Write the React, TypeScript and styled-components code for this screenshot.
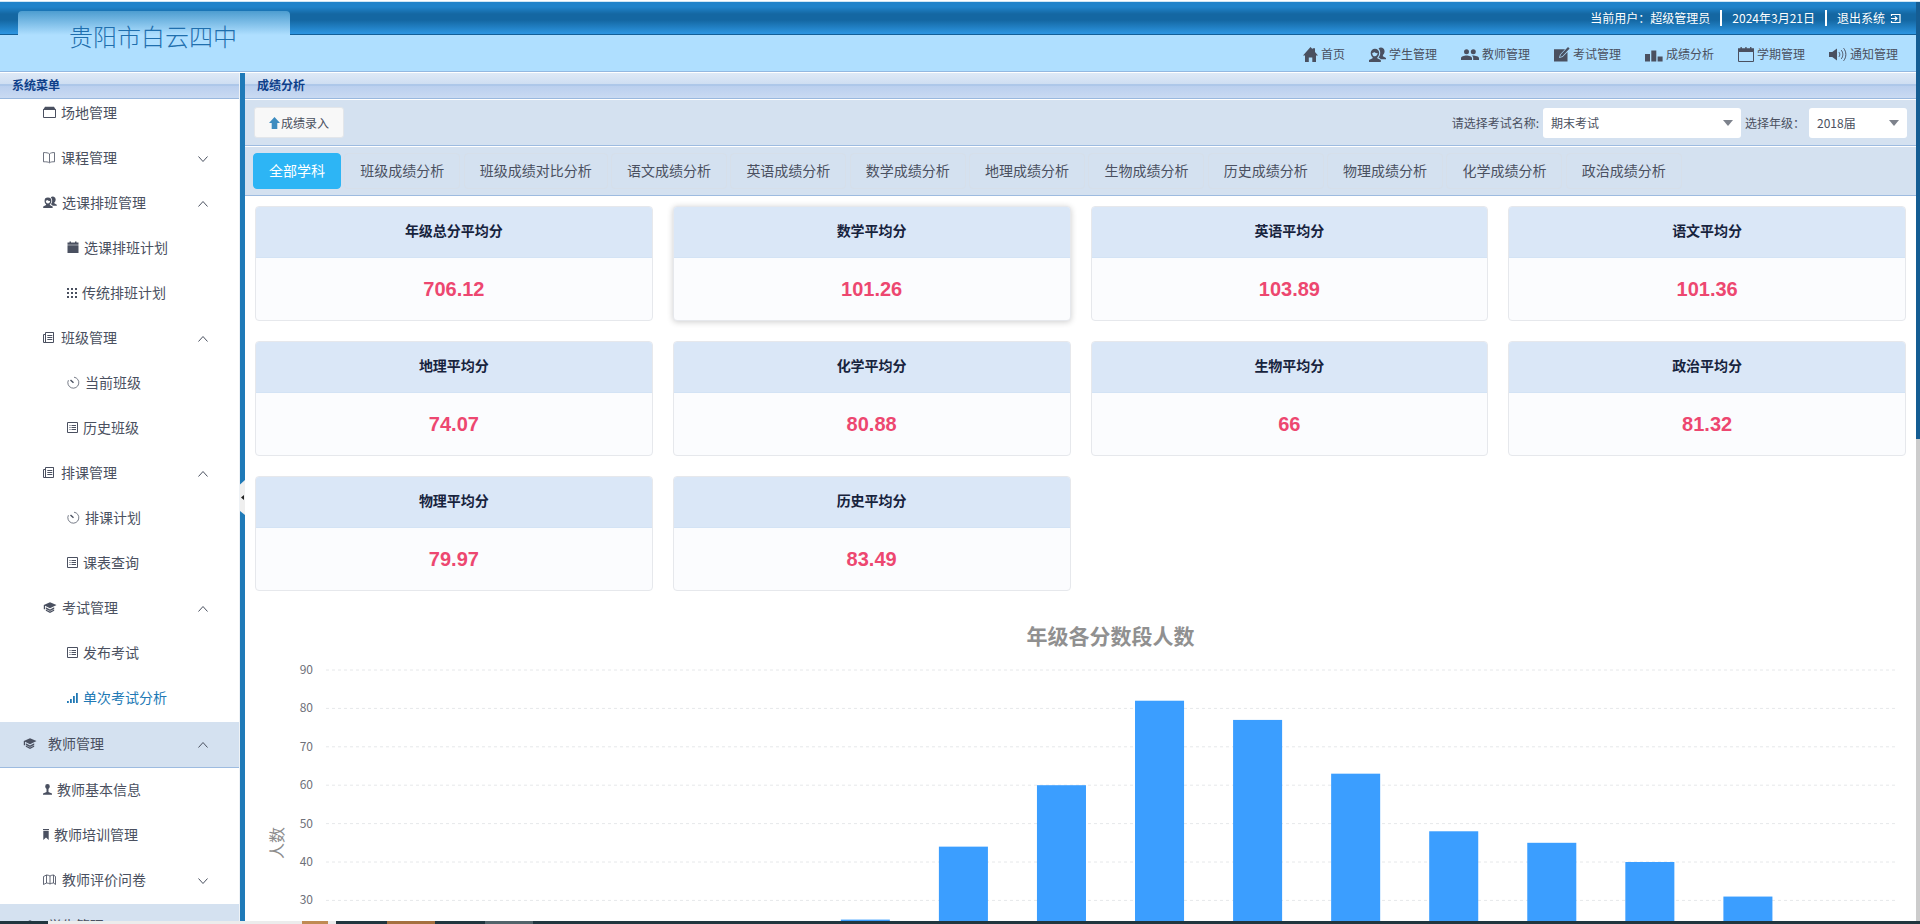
import React from "react";
import styled, { createGlobalStyle } from "styled-components";

const GlobalStyle = createGlobalStyle`
  *, *::before, *::after { box-sizing: border-box; }
  body {
    margin: 0;
    background: #fff;
    color: #4a5060;
    font: 12px/18px "Noto Sans CJK SC", "Noto Sans", sans-serif;
  }
  button, select { font: inherit; color: inherit; }
  a { color: inherit; text-decoration: none; }
  ul { list-style: none; margin: 0; padding: 0; }
  h1, h2, h3, p { margin: 0; }
`;

/* ---------- icons ---------- */

type IconName =
  | "home" | "students" | "team" | "edit" | "columns" | "calendar" | "sound"
  | "box" | "book" | "calendarSolid" | "grid" | "docs" | "gauge" | "list"
  | "cap" | "signal" | "person" | "bookmark" | "map" | "exit" | "up" | "down"
  | "arrowUp" | "caret";

const line = { fill: "none", stroke: "currentColor", strokeWidth: 1 };

const icons: Record<IconName, { box: string; art: React.ReactNode }> = {
  home: {
    box: "0 0 15 15",
    art: <path d="M7.5 0 9.6 2.3V1.2h2.4v3.7L15 8.4h-2V15H9.3v-4.6H5.8V15H2V8.4H0z" />,
  },
  students: {
    box: "0 0 17 15",
    art: (
      <>
        <path d="M9.5 1.6A3.6 3.6 0 0 1 15.6 4c0 1.800-.6 3.200-1.700 4v1.200L17 11v1.200h-5.200c-.5-.8-1.400-1.400-2.300-1.800 1.200-1.300 1.800-3 1.700-4.800-.1-1.700-.7-3-1.700-4z" />
        <path fillRule="evenodd" d="M6 1.800a4.200 4.200 0 0 1 4.200 4.300c0 1.800-.8 3.300-1.900 4.100v1L11.800 13v2H0v-2l3.600-1.800v-1C2.500 9.400 1.700 7.900 1.700 6.100A4.200 4.200 0 0 1 6 1.800zM3.200 5.900c0 2 1.200 3.400 2.700 3.400s2.700-1.400 2.700-3.200C7 6.300 6 5.800 5.300 5 4.700 5.600 4 5.900 3.200 5.900z" />
      </>
    ),
  },
  team: {
    box: "0 0 18 15",
    art: (
      <>
        <circle cx="5.500" cy="4.700" r="2.500" />
        <circle cx="12.300" cy="4.700" r="2.500" />
        <path d="M0 13v-1.800C0 9.500 3.200 8.500 5.500 8.500S11 9.500 11 11.200V13zM12.200 13v-1.800c0-1-.5-1.900-1.400-2.600 2.700-.3 7.200.7 7.200 2.600V13z" />
      </>
    ),
  },
  edit: {
    box: "0 0 16 15",
    art: (
      <>
        <path d="M0 2.200h11L6 7.500 5 11l3.600-1L13.500 5v9.500H0z" />
        <path d="m6 10 .8-2.600L14 0l1.600 1.500L8.500 9.200z" />
      </>
    ),
  },
  columns: {
    box: "0 0 18 15",
    art: <path d="M0 7h5v7.500H0zM6.300 3.500h5v11h-5zM12.600 9.500h5v5h-5z" />,
  },
  calendar: {
    box: "0 0 16 15",
    art: (
      <>
        <path d="M0 1.200h2.500V0h1.300v1.200h3.500V0h1.300v1.200h3.500V0h1.300v1.200H16v3.600H0z" />
        <path {...line} d="M.5 4.500h15v10H.5z" />
      </>
    ),
  },
  sound: {
    box: "0 0 18 15",
    art: (
      <>
        <path d="M0 5h3.200L8 1.500v12L3.200 10H0z" />
        <path {...line} d="M10 5.200c1 1.400 1 3.200 0 4.600M12.300 3.200c2 2.500 2 6.100 0 8.600M14.600 1.200c3 3.700 3 8.900 0 12.600" />
      </>
    ),
  },
  box: {
    box: "0 0 13 13",
    art: (
      <>
        <path d="M2 .8h9L13 4H0z" />
        <path {...line} d="M.5 3.500h12v8H.5z" />
      </>
    ),
  },
  book: {
    box: "0 0 13 13",
    art: (
      <path {...line} d="M6.500 3v8.500M6.500 3C5.500 1.800 3 1.500.5 1.600v9.200c2.500-.1 5 .1 6 1M6.500 3c1-1.200 3-1.500 5-1.400v9.200c-2.200-.1-4 .1-5 1" strokeOpacity=".8" />
    ),
  },
  calendarSolid: {
    box: "0 0 12 13",
    art: <path d="M.5 1.500h2V.5h1.500v1h4v-1h1.500v1h2v2.300H.5zM.5 4.300h11V12H.5z" />,
  },
  grid: {
    box: "0 0 10 13",
    art: <path d="M0 2h2v2H0zM4 2h2v2H4zM8 2h2v2H8zM0 6h2v2H0zM4 6h2v2H4zM8 6h2v2H8zM0 10h2v2H0zM4 10h2v2H4zM8 10h2v2H8z" />,
  },
  docs: {
    box: "0 0 13 13",
    art: (
      <>
        <path {...line} d="M2.500 1.500h8v10h-10v-8h2zM2.500 3v8.500M4.300 4.500h5M4.300 6.500h5M4.300 8.500h5" />
        <path d="M3 1h7.500v1H3z" />
      </>
    ),
  },
  gauge: {
    box: "0 0 13 13",
    art: (
      <>
        <path {...line} strokeOpacity=".75" d="M7 1.200a5.500 5.500 0 1 1-5.600 3" />
        <path {...line} d="m3.500 4 3 2.800" strokeWidth="1.400" />
      </>
    ),
  },
  list: {
    box: "0 0 11 13",
    art: <path {...line} d="M.5 1.500h10v10H.5zM2.500 4.500h1M4.500 4.500h4.500M2.500 6.500h1M4.500 6.500h4.500M2.500 8.500h1M4.500 8.500h4.500" />,
  },
  cap: {
    box: "0 0 14 13",
    art: <path d="M7 1.200 13.500 4 7 7.300 2 4.800v3.400H.8V4zM2.800 6.300 7 8.500l4.200-2.200v1.600L7 10 2.800 7.900zM2.800 8.500 7 10.600l4.200-2.100v1.200L7 12 2.800 9.800z" />,
  },
  signal: {
    box: "0 0 11 13",
    art: <path d="M0 10h1.800v2H0zM3 8h1.800v4H3zM6 5h1.800v7H6zM9 2h1.800v10H9z" />,
  },
  person: {
    box: "0 0 9 13",
    art: <path d="M4.500 1a2.300 2.300 0 0 1 2.300 2.400c0 1-.6 1.900-1.300 2.300V9L9 10.500v1.300H0v-1.300L3.500 9V5.700C2.800 5.300 2.200 4.400 2.200 3.400A2.300 2.300 0 0 1 4.500 1z" />,
  },
  bookmark: {
    box: "0 0 6 13",
    art: <path d="M0 1h6v1H0zM.3 2.700h5.400V12L3 9.500.3 12z" />,
  },
  map: {
    box: "0 0 14 13",
    art: <path {...line} strokeOpacity=".85" d="M.5 3.500 3.500 2c1.500 0 2 .3 3.500 1 1.500-.7 2-1 3.500-1l2 1.500v8L10.500 10c-1.500 0-2 .3-3.500 1-1.500-.7-2-1-3.500-1l-3 1.500zM3.500 2v8M7 3v8M10.500 2v8" />,
  },
  exit: {
    box: "0 0 11 11",
    art: (
      <>
        <path {...line} d="M1.500 3V1.500h8.500v8H1.500V8" strokeWidth="1.200" />
        <path {...line} d="M1 5.500h6M4.800 3.300l2.200 2.200-2.200 2.200" strokeWidth="1.200" />
      </>
    ),
  },
  up: { box: "0 0 10 6", art: <path {...line} d="m.5 5.500 4.500-5 4.500 5" /> },
  down: { box: "0 0 10 6", art: <path {...line} d="m.5.500 4.500 5 4.500-5" /> },
  arrowUp: { box: "0 0 11 12", art: <path d="M5.500 0 11 6H8.300v6H2.700V6H0z" /> },
  caret: { box: "0 0 10 6", art: <path d="M0 0h10L5 6z" /> },
};

const Glyph = styled.svg`
  display: block;
  flex: none;
  fill: currentColor;
`;

function Icon({ name }: { name: IconName }) {
  const { box, art } = icons[name];
  const [, , w, h] = box.split(" ");
  return (
    <Glyph viewBox={box} width={w} height={h} aria-hidden="true">
      {art}
    </Glyph>
  );
}

/* ---------- page frame ---------- */

const Page = styled.div`
  display: flex;
  flex-direction: column;
  height: 100vh;
  overflow: hidden;
  border-top: 1px solid #fff;
`;

const Window = styled.div`
  display: flex;
  flex: 1;
  min-height: 0;
  border-top: 1px solid #cfe6f5;
`;

const Shell = styled.div`
  display: flex;
  flex-direction: column;
  flex: 1;
  min-width: 0;
`;

const ScrollTrack = styled.div`
  width: 4px;
  background: #ccc;
`;

const ScrollThumb = styled.div`
  height: 47.6%;
  background: #155d93;
`;

const Header = styled.header`
  position: relative;
  border-bottom: 1px solid #fff;
`;

const TopBar = styled.div`
  display: flex;
  justify-content: flex-end;
  align-items: center;
  height: 33px;
  padding-right: 15px;
  color: #fff;
  background: linear-gradient(#2083ca 0, #2083ca 5px, #1467a2 12px, #1467a2 18px, #2d96e2 32px);
  border-bottom: 1px solid #125f98;
`;

const TopItem = styled.span`
  display: flex;
  align-items: center;
  gap: 5px;
  height: 16px;
  padding-right: 10px;

  & + & {
    padding-left: 10px;
    border-left: 2px solid #fff;
  }
  &:last-child {
    padding-right: 0;
  }
`;

const ExitLink = styled.a`
  display: flex;
  align-items: center;
  gap: 5px;
`;

const Brand = styled.div`
  position: absolute;
  left: 18px;
  top: 9px;
  width: 272px;
  height: 50px;
  padding-left: 51px;
  border-radius: 4px 4px 0 0;
  background: linear-gradient(#4d9dd0, #afdfff 24px);
`;

const BrandName = styled.h1`
  font-size: 24px;
  font-weight: 300;
  line-height: 50px;
  color: #1f6fae;
`;

const Nav = styled.nav`
  display: flex;
  justify-content: flex-end;
  align-items: center;
  gap: 24px;
  height: 37px;
  padding: 2px 18px 0 0;
  background: #afdfff;
  border-bottom: 1px solid #94b8e0;
`;

const NavLink = styled.a`
  display: flex;
  align-items: center;
  gap: 3px;
`;

const Body = styled.div`
  display: flex;
  flex: 1;
  min-height: 0;
`;

/* ---------- side menu ---------- */

const Sidebar = styled.aside`
  display: flex;
  flex-direction: column;
  width: 240px;
  border-right: 1px solid #eef2f6;
`;

const PanelTitle = styled.h2`
  flex: none;
  height: 26px;
  padding-left: 12px;
  font-size: 12px;
  line-height: 24px;
  color: #0e3f8a;
  background: linear-gradient(#dfe9f6 0, #cedef2 11px, #adc7e9 11px, #adc7e9 13px, #bacfee 13px, #c9daf2 25px);
  border-bottom: 1px solid #99b8de;
`;

const MenuView = styled.nav`
  flex: 1;
  min-height: 0;
  overflow: hidden;
`;

const Menu = styled.ul`
  margin-top: -8px;
`;

const levels = [
  { indent: 23, gap: 11 },
  { indent: 43, gap: 5 },
  { indent: 67, gap: 5 },
];

const MenuLink = styled.a<{ $level: number; $active?: boolean }>`
  display: flex;
  align-items: center;
  gap: ${(p) => levels[p.$level].gap}px;
  height: ${(p) => (p.$level === 0 ? 47 : 45)}px;
  padding: 0 31px 3px ${(p) => levels[p.$level].indent}px;
  font-size: 14px;
  line-height: 20px;
  color: ${(p) => (p.$active ? "#2179b5" : "#4a5060")};
  ${(p) =>
    p.$level === 0 &&
    "background: #d4e1f0; border-top: 1px solid #fff; border-bottom: 1px solid #9dbbe0;"}
`;

const MenuText = styled.span`
  flex: 1;
`;

const Mark = styled.span`
  padding-top: 3px;
`;

type Entry = {
  text: string;
  icon: IconName;
  level: number;
  mark?: "up" | "down";
  active?: boolean;
};

const menu: Entry[] = [
  { text: "场地管理", icon: "box", level: 1 },
  { text: "课程管理", icon: "book", level: 1, mark: "down" },
  { text: "选课排班管理", icon: "students", level: 1, mark: "up" },
  { text: "选课排班计划", icon: "calendarSolid", level: 2 },
  { text: "传统排班计划", icon: "grid", level: 2 },
  { text: "班级管理", icon: "docs", level: 1, mark: "up" },
  { text: "当前班级", icon: "gauge", level: 2 },
  { text: "历史班级", icon: "list", level: 2 },
  { text: "排课管理", icon: "docs", level: 1, mark: "up" },
  { text: "排课计划", icon: "gauge", level: 2 },
  { text: "课表查询", icon: "list", level: 2 },
  { text: "考试管理", icon: "cap", level: 1, mark: "up" },
  { text: "发布考试", icon: "list", level: 2 },
  { text: "单次考试分析", icon: "signal", level: 2, active: true },
  { text: "教师管理", icon: "cap", level: 0, mark: "up" },
  { text: "教师基本信息", icon: "person", level: 1 },
  { text: "教师培训管理", icon: "bookmark", level: 1 },
  { text: "教师评价问卷", icon: "map", level: 1, mark: "down" },
  { text: "学生管理", icon: "cap", level: 0, mark: "up" },
];

const SmallIcon = styled.span`
  svg {
    width: 14px;
    height: 12px;
  }
`;

const Splitter = styled.div`
  display: flex;
  align-items: center;
  flex: none;
  width: 5px;
  margin-top: -1px;
  padding-top: 2px;
  background: #1f7ab8;
`;

const CollapseButton = styled.button`
  display: block;
  width: 5px;
  height: 35px;
  padding: 0;
  border: 0;
  background: none;
`;

/* ---------- main panel ---------- */

const Main = styled.main`
  display: flex;
  flex-direction: column;
  flex: 1;
  min-width: 0;
  overflow: hidden;
`;

const Toolbar = styled.div`
  display: flex;
  flex: none;
  align-items: center;
  justify-content: space-between;
  height: 47px;
  padding: 0 9px;
  background: #d4e1f0;
  border-top: 1px solid #fff;
  border-bottom: 1px solid #9dbbe0;
`;

const EntryButton = styled.button`
  display: flex;
  align-items: center;
  justify-content: center;
  gap: 1px;
  width: 90px;
  height: 31px;
  padding: 0;
  border: 1px solid #e3e6ea;
  border-radius: 3px;
  background: #f8f8f8;

  svg {
    color: #3d8cc0;
  }
`;

const Filters = styled.div`
  display: flex;
  align-items: center;
  gap: 4px;
`;

const SelectBox = styled.span<{ $width: number }>`
  position: relative;
  width: ${(p) => p.$width}px;
  color: #7d828c;

  svg {
    position: absolute;
    right: 8px;
    top: 12px;
    pointer-events: none;
  }
`;

const Select = styled.select`
  display: block;
  width: 100%;
  height: 30px;
  padding: 0 8px;
  appearance: none;
  border: 0;
  border-radius: 3px;
  background: #fff;
  color: #4a5060;
`;

const Tabs = styled.div`
  flex: none;
  height: 50px;
  padding: 6px 8px 0;
  white-space: nowrap;
  overflow: hidden;
  font: 12px/36px "Liberation Sans", sans-serif;
  background: #d4e1f0;
  border-top: 1px solid #fff;
  border-bottom: 1px solid #9dbbe0;
`;

const Tab = styled.button<{ $active?: boolean }>`
  height: 36px;
  padding: 0 15px 3px;
  font: 14px/20px "Noto Sans CJK SC", sans-serif;
  vertical-align: top;
  border: 1px solid ${(p) => (p.$active ? "#2db5f5" : "#d6dfea")};
  border-radius: 4px;
  color: ${(p) => (p.$active ? "#fff" : "#4a5060")};
  background: ${(p) => (p.$active ? "#2db5f5" : "none")};
`;

const Content = styled.div`
  flex: 1;
  min-height: 0;
  overflow: hidden;
  padding: 10px;
`;

const Cards = styled.div`
  display: grid;
  grid-template-columns: repeat(4, 1fr);
  gap: 20px;
`;

const Card = styled.section<{ $raised?: boolean }>`
  height: 115px;
  border: 1px solid #e6e8ec;
  border-radius: 4px;
  overflow: hidden;
  background: #fbfcfe;
  text-align: center;
  box-shadow: ${(p) => (p.$raised ? "0 1px 6px rgba(0, 0, 0, 0.2)" : "none")};
`;

const CardTitle = styled.h3`
  height: 51px;
  font-size: 14px;
  line-height: 47px;
  color: #17233d;
  background: #dae7f7;
  border-bottom: 1px solid #d3e3f5;
`;

const CardValue = styled.p`
  font: bold 20px/62px "Liberation Sans", sans-serif;
  color: #ed4770;
`;

const scores = [
  ["年级总分平均分", "706.12"],
  ["数学平均分", "101.26"],
  ["英语平均分", "103.89"],
  ["语文平均分", "101.36"],
  ["地理平均分", "74.07"],
  ["化学平均分", "80.88"],
  ["生物平均分", "66"],
  ["政治平均分", "81.32"],
  ["物理平均分", "79.97"],
  ["历史平均分", "83.49"],
];

const tabs = [
  "全部学科", "班级成绩分析", "班级成绩对比分析", "语文成绩分析", "英语成绩分析",
  "数学成绩分析", "地理成绩分析", "生物成绩分析", "历史成绩分析", "物理成绩分析",
  "化学成绩分析", "政治成绩分析",
];

const navItems: [IconName, string][] = [
  ["home", "首页"],
  ["students", "学生管理"],
  ["team", "教师管理"],
  ["edit", "考试管理"],
  ["columns", "成绩分析"],
  ["calendar", "学期管理"],
  ["sound", "通知管理"],
];

/* ---------- chart ---------- */

const Chart = styled.figure`
  margin: 28px 0 0;
`;

const ChartTitle = styled.figcaption`
  padding: 0 11px 0 71px;
  font-size: 21px;
  font-weight: bold;
  line-height: 32px;
  text-align: center;
  color: #909090;
`;

const Plot = styled.div`
  display: flex;
  padding: 4px 11px 0 8px;
`;

const AxisName = styled.div`
  width: 26px;
  height: 376px;
  writing-mode: vertical-rl;
  text-orientation: sideways;
  transform: rotate(180deg);
  text-align: center;
  font-size: 16px;
  line-height: 26px;
  color: #8c8c8c;
`;

const Canvas = styled.svg`
  display: block;
  flex: 1;
  min-width: 0;
  height: 370px;
`;

const counts = [0, 0, 0, 0, 0, 25, 44, 60, 82, 77, 63, 48, 45, 40, 31, 0];
const ticks = [90, 80, 70, 60, 50, 40, 30];
const topY = 15;
const step = 38.4;
const yOf = (value: number) => topY + ((90 - value) / 10) * step;

function Histogram() {
  const slot = 100 / counts.length;
  return (
    <Chart>
      <ChartTitle>年级各分数段人数</ChartTitle>
      <Plot>
        <AxisName>人数</AxisName>
        <svg width="37" height="370" aria-hidden="true">
          {ticks.map((t) => (
            <text key={t} x="24" y={yOf(t) + 4} fontSize="12" textAnchor="end" fill="#6e7079">
              {t}
            </text>
          ))}
        </svg>
        <Canvas role="img" aria-label="年级各分数段人数">
          {ticks.map((t) => (
            <line
              key={t}
              x1="0"
              x2="100%"
              y1={yOf(t)}
              y2={yOf(t)}
              stroke="#e6e8ea"
              strokeDasharray="3 3"
            />
          ))}
          {counts.map((c, i) => (
            <rect
              key={i}
              x={`${(i + 0.25) * slot}%`}
              y={yOf(c)}
              width={`${slot / 2}%`}
              height={yOf(0) - yOf(c)}
              fill="#3b9eff"
            />
          ))}
        </Canvas>
      </Plot>
    </Chart>
  );
}

/* ---------- desktop edge under the window ---------- */

const Edge = styled.div`
  display: flex;
  flex: none;
  height: 3px;
  background: #21363f;
`;

const EdgePart = styled.div<{ $width: number; $color: string }>`
  width: ${(p) => p.$width}px;
  background: ${(p) => p.$color};
`;

const edgeParts: [number, string][] = [
  [48, "#21363f"],
  [254, "#ececec"],
  [26, "#c08a52"],
  [8, "#ececec"],
  [51, "#21363f"],
  [48, "#a5703f"],
  [50, "#21363f"],
  [48, "#53646b"],
];

export default function App() {
  return (
    <>
      <GlobalStyle />
      <Page>
        <Window>
          <Shell>
            <Header>
              <TopBar>
                <TopItem>当前用户：超级管理员</TopItem>
                <TopItem>2024年3月21日</TopItem>
                <TopItem>
                  <ExitLink href="#logout">
                    退出系统
                    <Icon name="exit" />
                  </ExitLink>
                </TopItem>
              </TopBar>
              <Nav>
                {navItems.map(([icon, text]) => (
                  <NavLink key={text} href="#nav">
                    <Icon name={icon} />
                    {text}
                  </NavLink>
                ))}
              </Nav>
              <Brand>
                <BrandName>贵阳市白云四中</BrandName>
              </Brand>
            </Header>
            <Body>
              <Sidebar>
                <PanelTitle>系统菜单</PanelTitle>
                <MenuView>
                  <Menu>
                    {menu.map((m, i) => (
                      <li key={i}>
                        <MenuLink href="#menu" $level={m.level} $active={m.active}>
                          {m.icon === "students" ? (
                            <SmallIcon>
                              <Icon name={m.icon} />
                            </SmallIcon>
                          ) : (
                            <Icon name={m.icon} />
                          )}
                          <MenuText>{m.text}</MenuText>
                          {m.mark && (
                            <Mark>
                              <Icon name={m.mark} />
                            </Mark>
                          )}
                        </MenuLink>
                      </li>
                    ))}
                  </Menu>
                </MenuView>
              </Sidebar>
              <Splitter>
                <CollapseButton aria-label="收起菜单">
                  <svg width="5" height="35" viewBox="0 0 5 35" display="block" aria-hidden="true">
                    <path d="M0 4.500 5 0v35L0 31z" fill="#efefef" />
                    <path d="M4 15v5L1 17.500z" fill="#222" />
                  </svg>
                </CollapseButton>
              </Splitter>
              <Main>
                <PanelTitle>成绩分析</PanelTitle>
                <Toolbar>
                  <EntryButton>
                    <Icon name="arrowUp" />
                    成绩录入
                  </EntryButton>
                  <Filters>
                    <label htmlFor="exam">请选择考试名称:</label>
                    <SelectBox $width={198}>
                      <Select id="exam">
                        <option>期末考试</option>
                      </Select>
                      <Icon name="caret" />
                    </SelectBox>
                    <label htmlFor="grade">选择年级：</label>
                    <SelectBox $width={98}>
                      <Select id="grade">
                        <option>2018届</option>
                      </Select>
                      <Icon name="caret" />
                    </SelectBox>
                  </Filters>
                </Toolbar>
                <Tabs role="tablist">
                  {tabs.map((t, i) => (
                    <React.Fragment key={t}>
                      <Tab role="tab" aria-selected={i === 0} $active={i === 0}>
                        {t}
                      </Tab>{" "}
                    </React.Fragment>
                  ))}
                </Tabs>
                <Content>
                  <Cards>
                    {scores.map(([title, value], i) => (
                      <Card key={title} $raised={i === 1}>
                        <CardTitle>{title}</CardTitle>
                        <CardValue>{value}</CardValue>
                      </Card>
                    ))}
                  </Cards>
                  <Histogram />
                </Content>
              </Main>
            </Body>
          </Shell>
          <ScrollTrack>
            <ScrollThumb />
          </ScrollTrack>
        </Window>
        <Edge aria-hidden="true">
          {edgeParts.map(([w, c], i) => (
            <EdgePart key={i} $width={w} $color={c} />
          ))}
        </Edge>
      </Page>
    </>
  );
}
